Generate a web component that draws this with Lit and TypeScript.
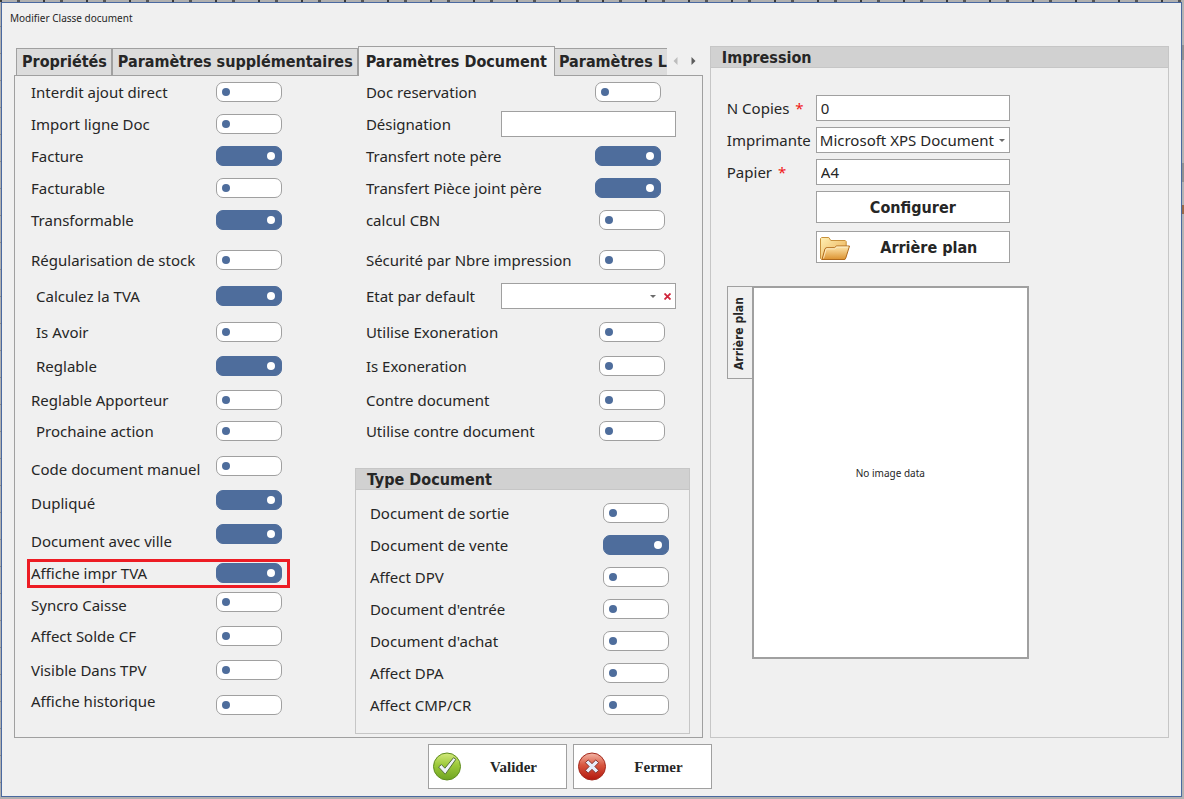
import { LitElement, html, css, svg } from "lit";
import { customElement } from "lit/decorators.js";
import { classMap } from "lit/directives/class-map.js";

interface Option {
  label: string;
  on?: boolean;
  cls?: string;
  kind?: "toggle" | "text" | "select";
}

const GENERAL: Option[] = [
  { label: "Interdit ajout direct" },
  { label: "Import ligne Doc" },
  { label: "Facture", on: true },
  { label: "Facturable" },
  { label: "Transformable", on: true },
  { label: "Régularisation de stock" },
  { label: "Calculez la TVA", on: true, cls: "indent" },
  { label: "Is Avoir", cls: "indent" },
  { label: "Reglable", on: true, cls: "indent" },
  { label: "Reglable Apporteur" },
  { label: "Prochaine action", cls: "indent" },
  { label: "Code document manuel", cls: "low" },
  { label: "Dupliqué", on: true, cls: "low" },
  { label: "Document avec ville", on: true, cls: "lower" },
  { label: "Affiche impr TVA", on: true, cls: "marked" },
  { label: "Syncro Caisse", cls: "low" },
  { label: "Affect Solde CF" },
  { label: "Visible Dans TPV" },
  { label: "Affiche historique", cls: "high" },
];

const LINKS: Option[] = [
  { label: "Doc reservation", cls: "inset" },
  { label: "Désignation", kind: "text" },
  { label: "Transfert note père", on: true, cls: "inset" },
  { label: "Transfert Pièce joint père", on: true, cls: "inset" },
  { label: "calcul CBN" },
  { label: "Sécurité par Nbre impression" },
  { label: "Etat par default", kind: "select" },
  { label: "Utilise Exoneration" },
  { label: "Is Exoneration" },
  { label: "Contre document" },
  { label: "Utilise contre document" },
];

const TYPES: Option[] = [
  { label: "Document de sortie" },
  { label: "Document de vente", on: true },
  { label: "Affect DPV" },
  { label: "Document d'entrée" },
  { label: "Document d'achat" },
  { label: "Affect DPA" },
  { label: "Affect CMP/CR" },
];

const caret = svg`<svg class="caret" width="6" height="3" viewBox="0 0 6 3"><path d="M0 0h6L3 3z" fill="#6b6b6b"/></svg>`;

const folderIcon = html`<svg width="32" height="26" viewBox="0 0 32 26">
  <defs>
    <linearGradient id="fb" x1="0" y1="0" x2="1" y2="1"><stop offset="0" stop-color="#fff0b4"/><stop offset="1" stop-color="#e9a94c"/></linearGradient>
    <linearGradient id="ff" x1="0" y1="0" x2="0" y2="1"><stop offset="0" stop-color="#ffe9b0"/><stop offset="1" stop-color="#dc9230"/></linearGradient>
  </defs>
  <path d="M.5 23.5V3.6L1.6 2.5h7.2l2 3h14.4l1 1v5L25 24.5H1.5z" fill="url(#fb)" stroke="#c8913c"/>
  <path d="M2 24.5l3-10.8 1.2-1h8.3l2-1.7h13L25.8 23l-1.2 1.5z" fill="url(#ff)" stroke="#b06a1c"/>
  <path d="M3.5 23.4L6 14.6l.8-.8h8l2-1.8h11.4" fill="none" stroke="#fff4d2" stroke-width=".8"/>
</svg>`;

const okIcon = html`<svg width="30" height="30" viewBox="0 0 30 30">
  <defs><linearGradient id="gr" x1="0" y1="0" x2="0" y2="1"><stop offset="0" stop-color="#d3e97c"/><stop offset=".45" stop-color="#9cc93a"/><stop offset="1" stop-color="#6fa422"/></linearGradient></defs>
  <circle cx="15" cy="14.5" r="13.5" fill="url(#gr)" stroke="#5e8c1e"/>
  <path d="M6.5 15l3-2.4 3.4 3.6 8.6-10.5 2.4 1.6-10.6 14.9z" fill="#eef3f8" stroke="#56703a" stroke-linejoin="round"/>
</svg>`;

const closeIcon = html`<svg width="30" height="30" viewBox="0 0 30 30">
  <defs><linearGradient id="rd" x1="0" y1="0" x2="0" y2="1"><stop offset="0" stop-color="#f3b7a8"/><stop offset=".45" stop-color="#d8563f"/><stop offset="1" stop-color="#b3170d"/></linearGradient></defs>
  <circle cx="15" cy="14.5" r="13.5" fill="url(#rd)" stroke="#a3281c"/>
  <path d="M11.2 7.9L15 11.6l3.8-3.7 2.8 2.8-3.7 3.8 3.7 3.8-2.8 2.8-3.8-3.7-3.8 3.7-2.8-2.8 3.7-3.8-3.7-3.8z" fill="#e6eefb" stroke="#84302a" stroke-linejoin="round"/>
</svg>`;

@customElement("app-root")
export class AppRoot extends LitElement {
  static styles = css`
    :host {
      display: block;
      box-sizing: border-box;
      min-height: 100vh;
      padding: 2px 2px 2px 1px;
      background:
        repeating-linear-gradient(90deg, #3a3a3a 0 2px, transparent 2px 17px, #555 17px 20px, transparent 20px 43px) top / 100% 2px no-repeat,
        linear-gradient(#b4b4b4 45px, #929292 45px 60px, #b4b4b4 60px 163px, #929292 163px 182px, #b4b4b4 182px 205px, #9a6a48 205px 214px, #b4b4b4 214px) right / 2px 100% no-repeat,
        repeating-linear-gradient(#b0b0b0 0 26px, #8c8c8c 26px 27px);
      color: #262626;
      font: 15px/20px "Noto Sans", sans-serif;
      --line: #a0a0a0;
      --soft: #c6c6c6;
      --accent: #4e6d9c;
      --face: #f0f0f0;
      --bold: bold 16px/20px "DejaVu Sans Condensed", "DejaVu Sans", sans-serif;
    }
    * { box-sizing: border-box; }
    input, select, button { font: inherit; color: inherit; margin: 0; border-radius: 0; }
    .window {
      min-height: calc(100vh - 4px);
      display: flex;
      flex-direction: column;
      background: var(--face);
      border: 1px solid #4a69a0;
    }
    .title { margin: 0; padding: 8px 8px 21px; font-size: 10px; font-weight: normal; line-height: 14px; }
    .body {
      flex: 1;
      display: grid;
      grid-template-columns: 3fr 2fr;
      gap: 7px;
      padding: 0 12px;
    }
    .left { display: flex; flex-direction: column; min-width: 0; }
    .tabs { display: flex; align-items: flex-end; height: 29px; padding-left: 2px; }
    .tab {
      height: 27px;
      padding: 0 4px 0 5px;
      border: 1px solid var(--line);
      border-bottom: 0;
      background: #dcdcdc;
      font: var(--bold);
      white-space: nowrap;
    }
    .tab.active { position: relative; height: 30px; margin-bottom: -1px; padding: 0 7px; background: var(--face); }
    .tab.cut { flex: 1 1 0; min-width: 0; overflow: hidden; border-width: 1px 0 0; padding: 0 0 0 4px; text-align: left; }
    .step { flex: none; width: 18px; height: 29px; padding: 0; border: 0; background: none; }
    .step svg { display: block; margin: auto; }
    .panel {
      flex: 1;
      display: grid;
      grid-template-columns: 263fr 335fr;
      gap: 65px;
      padding: 0 12px 3px;
      border: 1px solid var(--line);
    }
    .options {
      display: grid;
      grid-template-rows: 26px repeat(4, 32px) 40px 36px 36px 34px 34px 31px 35px 34px 34px 39px 29px 34px 34px 35px;
      align-content: start;
    }
    .options.links { grid-template-rows: 26px repeat(4, 32px) 40px 36px 36px 34px 34px 31px; }
    .row { align-self: end; height: 20px; display: flex; align-items: center; justify-content: space-between; padding: 0 8px 0 4px; white-space: nowrap; }
    .links .row { padding: 0 25px 0 11px; }
    .links .row.inset { padding-right: 29px; }
    .links .row.wide { padding-right: 14px; }
    .row.indent { padding-left: 9px; }
    .row.low label { padding-top: 5px; }
    .row.lower label { padding-top: 13px; }
    .row.high label { padding-bottom: 9px; }
    .row.marked { height: 29px; margin-bottom: -5px; padding: 0 5px 1px 1px; border: 3px solid #ed1c24; }
    .toggle {
      appearance: none;
      width: 66px;
      height: 20px;
      padding: 0 6px 0 5px;
      display: flex;
      align-items: center;
      border: 1px solid var(--line);
      border-radius: 7px;
      background: #fff;
    }
    .toggle::before { content: ""; width: 8px; height: 8px; border-radius: 50%; background: var(--accent); }
    .toggle:checked { justify-content: flex-end; background: var(--accent); border-color: var(--accent); }
    .toggle:checked::before { background: #fff; }
    .field { width: 175px; height: 26px; padding: 0 4px; border: 1px solid var(--line); background: #fff; }
    .combo { display: flex; align-items: center; background: #fff; border: 1px solid var(--line); width: 175px; height: 26px; padding-right: 4px; }
    .combo select { appearance: none; flex: 1; min-width: 0; height: 24px; padding: 0 3px; border: 0; background: none; }
    .caret { flex: none; }
    .clear { flex: none; width: 15px; height: 24px; padding: 0 0 0 8px; border: 0; background: none; }
    .clear svg { display: block; }
    .column { display: flex; flex-direction: column; justify-content: space-between; min-width: 0; }
    .group { display: flex; flex-direction: column; margin: 0; border: 1px solid var(--soft); }
    .group h2 { margin: 0; height: 21px; padding: 1px 11px 0; background: #d1d1d1; border-bottom: 1px solid var(--soft); font: var(--bold); }
    .types { display: grid; gap: 12px; padding: 13px 0 18px; }
    .types .row { padding: 0 20px 0 14px; }
    .print { display: grid; grid-template-columns: 89px 194px; gap: 6px 0; align-items: center; padding: 27px 16px 0; white-space: nowrap; }
    .print .field, .print .combo { width: 100%; }
    .req { margin-left: 2px; color: #f01818; }
    .action {
      grid-column: 2;
      height: 32px;
      padding: 1px 3px 0;
      display: flex;
      align-items: center;
      border: 1px solid var(--line);
      background: #fff;
      font: var(--bold);
    }
    .action span { flex: 1; text-align: center; }
    .action.second { margin-top: 2px; }
    .preview { flex: 1; display: flex; align-items: stretch; padding: 23px 16px 78px; }
    .side {
      align-self: flex-start;
      width: 26px;
      height: 93px;
      margin-right: -1px;
      z-index: 1;
      padding: 0 0 3px 3px;
      border: 1px solid var(--line);
      background: var(--face);
      font: bold 12px/20px "DejaVu Sans Condensed", sans-serif;
      writing-mode: vertical-rl;
      rotate: 180deg;
      text-align: center;
    }
    .image { width: 277px; display: grid; place-items: center; border: 2px solid var(--line); background: #fff; font-size: 10px; }
    .foot { display: flex; justify-content: center; gap: 6px; padding: 6px 43px 7px 0; }
    .foot button {
      width: 139px;
      height: 45px;
      padding: 0 1px 0 3px;
      display: flex;
      align-items: center;
      border: 1px solid var(--line);
      background: #fff;
      font: bold 15px/18px "Liberation Serif", serif;
    }
    .foot span { flex: 1; text-align: center; }
  `;

  private row(o: Option, id: string) {
    const kind = o.kind ?? "toggle";
    const control =
      kind === "text"
        ? html`<input class="field" id=${id} type="text" />`
        : kind === "select"
        ? html`<div class="combo">
            <select id=${id}><option></option></select>${caret}
            <button class="clear" aria-label="×"><svg width="7" height="7" viewBox="0 0 7 7"><path d="M.5.5l6 6m0-6l-6 6" stroke="#d0263c" stroke-width="1.8"/></svg></button>
          </div>`
        : html`<input class="toggle" id=${id} type="checkbox" role="switch" .checked=${!!o.on} />`;
    return html`<div class=${classMap({ row: true, wide: kind !== "toggle", ...(o.cls ? { [o.cls]: true } : {}) })}>
      <label for=${id}>${o.label}</label>${control}
    </div>`;
  }

  private step(path: string, fill: string, name: string) {
    return html`<button class="step" aria-label=${name}><svg width="5" height="8" viewBox="0 0 5 8"><path d=${path} fill=${fill}/></svg></button>`;
  }

  render() {
    return html`<div class="window">
      <h1 class="title">Modifier Classe document</h1>
      <main class="body">
        <section class="left">
          <div class="tabs" role="tablist">
            <button class="tab" role="tab">Propriétés</button>
            <button class="tab" role="tab">Paramètres supplémentaires</button>
            <button class="tab active" role="tab" aria-selected="true">Paramètres Document</button>
            <button class="tab cut" role="tab">Paramètres L</button>
            ${this.step("M4.5 0v8L.5 4z", "#bdbdbd", "‹")}${this.step("M.5 0v8l4-4z", "#5c5c5c", "›")}
          </div>
          <div class="panel" role="tabpanel">
            <div class="options">${GENERAL.map((o, i) => this.row(o, `general-${i}`))}</div>
            <div class="column">
              <div class="options links">${LINKS.map((o, i) => this.row(o, `link-${i}`))}</div>
              <section class="group">
                <h2>Type Document</h2>
                <div class="types">${TYPES.map((o, i) => this.row(o, `type-${i}`))}</div>
              </section>
            </div>
          </div>
        </section>
        <section class="group">
          <h2>Impression</h2>
          <div class="print">
            <label for="copies">N Copies <span class="req">*</span></label>
            <input class="field" id="copies" type="text" value="0" />
            <label for="printer">Imprimante</label>
            <div class="combo"><select id="printer"><option>Microsoft XPS Document</option></select>${caret}</div>
            <label for="paper">Papier <span class="req">*</span></label>
            <input class="field" id="paper" type="text" value="A4" />
            <button class="action"><span>Configurer</span></button>
            <button class="action second">${folderIcon}<span>Arrière plan</span></button>
          </div>
          <div class="preview">
            <button class="side">Arrière plan</button>
            <div class="image">No image data</div>
          </div>
        </section>
      </main>
      <footer class="foot">
        <button>${okIcon}<span>Valider</span></button>
        <button>${closeIcon}<span>Fermer</span></button>
      </footer>
    </div>`;
  }
}
